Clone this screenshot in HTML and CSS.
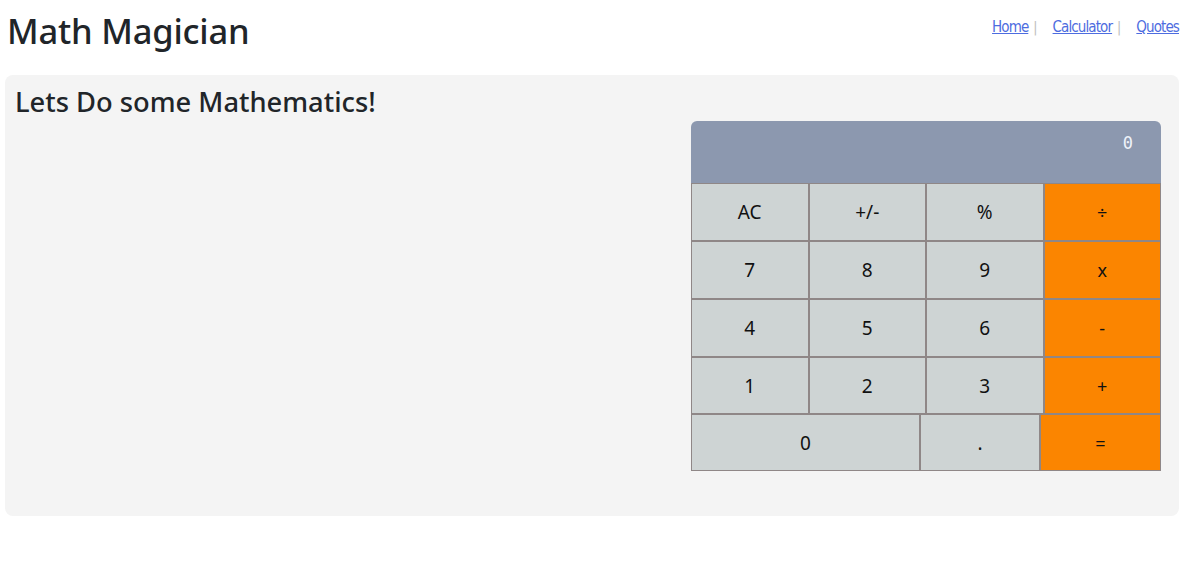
FILE: index.html
```html
<!DOCTYPE html>
<html lang="en">
<head>
<meta charset="utf-8">
<title>Math Magician</title>
<link rel="stylesheet" href="styles.css">
</head>
<body>
<div class="page">
  <header class="header">
    <h1 class="brand">Math Magician</h1>
    <nav class="nav">
      <a href="#" class="nav-link">Home</a><span class="sep">|</span>
      <a href="#" class="nav-link">Calculator</a><span class="sep">|</span>
      <a href="#" class="nav-link">Quotes</a>
    </nav>
  </header>
  <main class="panel">
    <h2 class="panel-title">Lets Do some Mathematics!</h2>
    <div class="calc">
      <div class="display">0</div>
      <div class="keys">
        <button class="key">AC</button>
        <button class="key">+/-</button>
        <button class="key">%</button>
        <button class="key op">÷</button>
        <button class="key">7</button>
        <button class="key">8</button>
        <button class="key">9</button>
        <button class="key op">x</button>
        <button class="key">4</button>
        <button class="key">5</button>
        <button class="key">6</button>
        <button class="key op">-</button>
        <button class="key">1</button>
        <button class="key">2</button>
        <button class="key">3</button>
        <button class="key op">+</button>
      </div>
      <div class="keys last">
        <button class="key">0</button>
        <button class="key">.</button>
        <button class="key op">=</button>
      </div>
    </div>
  </main>
</div>
</body>
</html>
```

FILE: styles.css
```css
* { box-sizing: border-box; }
html, body { margin: 0; padding: 0; background: #fff; }
body { font-family: "Noto Sans", "Open Sans", sans-serif; color: #212529; }
.page { padding: 0 21px 0 5px; }
.header {
  display: flex;
  justify-content: space-between;
  align-items: center;
  height: 62px;
  margin-bottom: 13px;
}
.brand {
  margin: 0 0 0 2px;
  font-size: 34.5px;
  font-weight: 500;
  line-height: 1;
  letter-spacing: -0.2px;
}
.nav {
  display: flex;
  align-items: center;
  font-family: "DejaVu Sans Condensed", "Liberation Sans Narrow", sans-serif;
  font-size: 15px;
  letter-spacing: -0.9px;
  margin-top: -8px;
}
.nav-link { color: #4d6ce0; text-decoration: underline; }
.sep { color: #bdbdbd; margin: 0 15px 0 5px; font-size: 14px; letter-spacing: 0; }
.panel {
  background: #f4f4f4;
  border-radius: 8px;
  height: 441px;
  padding: 11px 18px 0 10px;
  display: flex;
  flex-direction: column;
}
.panel-title {
  margin: 0;
  font-size: 27.3px;
  font-weight: 500;
  line-height: 31px;
}
.calc {
  align-self: flex-end;
  width: 470px;
  margin-top: 4px;
}
.display {
  background: #8c98af;
  height: 62px;
  border-radius: 6px 6px 0 0;
  color: #eef2fa;
  font-family: "DejaVu Sans Mono", monospace;
  font-size: 17px;
  text-align: right;
  padding: 12px 28px 0 0;
}
.keys {
  display: grid;
  grid-template-columns: repeat(4, 1fr);
}
.keys.last { grid-template-columns: 229px 120px 1fr; }
.key {
  height: 58px;
  border: 1px solid #8f8787;
  background: #ced4d4;
  font-family: "Noto Sans", "Open Sans", sans-serif;
  font-size: 19px;
  color: #111;
  padding: 0;
}
.keys .key:nth-child(n+13) { height: 57px; }
.keys.last .key { height: 57px; }
.key.op { background: #fb8500; font-size: 18px; }
```
